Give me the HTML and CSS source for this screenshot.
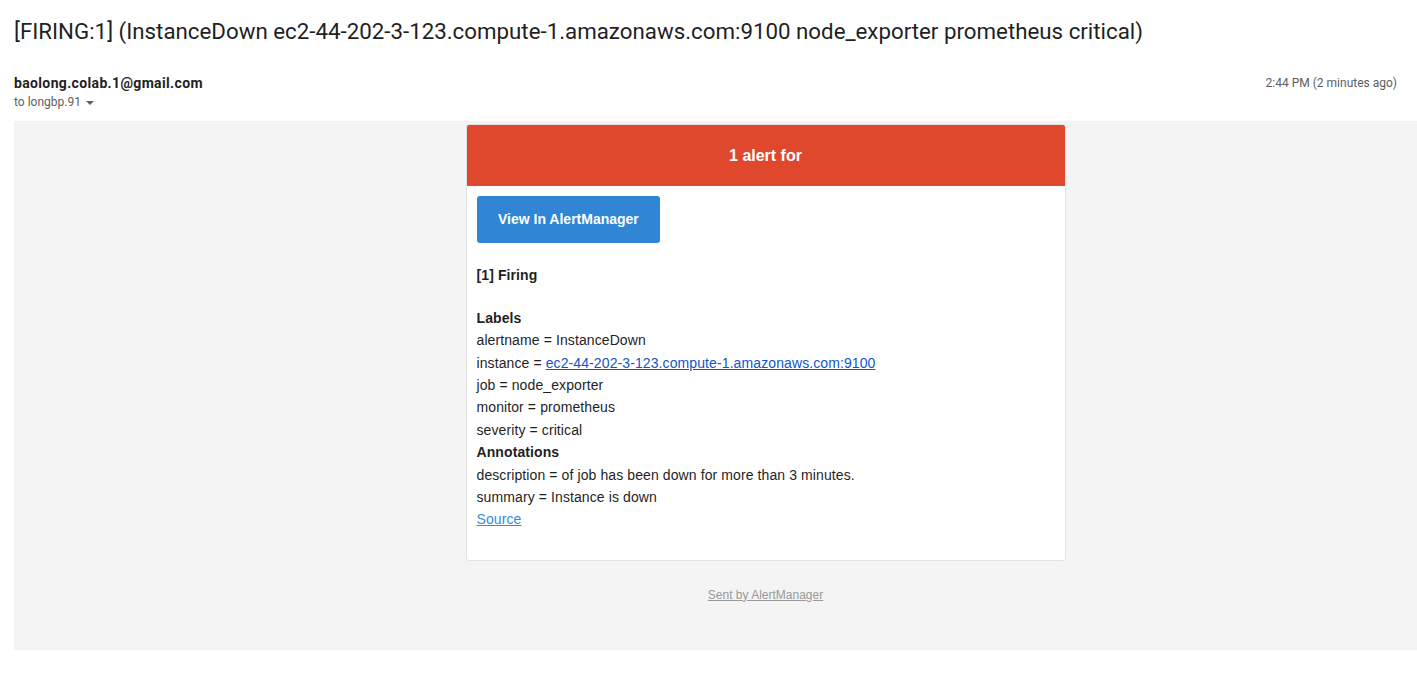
FILE: index.html
```html
<!DOCTYPE html>
<html>
<head>
<meta charset="utf-8">
<link rel="stylesheet" href="styles.css">
</head>
<body>
<div class="page">
  <h1 class="subject">[FIRING:1] (InstanceDown ec2-44-202-3-123.compute-1.amazonaws.com:9100 node_exporter prometheus critical)</h1>
  <div class="meta">
    <div class="from">
      <div class="sender">baolong.colab.1@gmail.com</div>
      <div class="to">to longbp.91 <span class="caret"></span></div>
    </div>
    <div class="time">2:44 PM (2 minutes ago)</div>
  </div>
  <div class="mailbody">
    <div class="inner">
      <div class="card">
        <div class="alert-head">1 alert for</div>
        <div class="content">
          <a class="btn">View In AlertManager</a>
          <div class="text">
            <div class="b">[1] Firing</div>
            <div class="blank"></div>
            <div class="b">Labels</div>
            <div>alertname = InstanceDown</div>
            <div>instance = <a class="link">ec2-44-202-3-123.compute-1.amazonaws.com:9100</a></div>
            <div>job = node_exporter</div>
            <div>monitor = prometheus</div>
            <div>severity = critical</div>
            <div class="b">Annotations</div>
            <div>description = of job has been down for more than 3 minutes.</div>
            <div>summary = Instance is down</div>
            <div><a class="src">Source</a></div>
          </div>
        </div>
      </div>
      <a class="footer">Sent by AlertManager</a>
    </div>
  </div>
</div>
</body>
</html>
```
FILE: styles.css
```css
html, body { margin: 0; padding: 0; background: #fff; }
body { overflow: hidden; font-family: Roboto, "Liberation Sans", Arial, sans-serif; color: #1f1f1f; }
.page { padding: 0 0 0 14px; }
.subject {
  margin: 0;
  padding-top: 17px;
  font-size: 22.3px;
  line-height: 28px;
  font-weight: 400;
  color: #1f1f1f;
  white-space: nowrap;
}
.meta {
  display: flex;
  justify-content: space-between;
  align-items: flex-start;
  margin-top: 28px;
  padding-right: 20px;
}
.sender { font-size: 14px; font-weight: 700; line-height: 20px; color: #1f1f1f; letter-spacing: 0.35px; }
.to { font-size: 12px; line-height: 16px; color: #5e5e5e; margin-top: 1px; display: flex; align-items: center; gap: 5px; }
.caret { width: 0; height: 0; border-left: 4px solid transparent; border-right: 4px solid transparent; border-top: 4px solid #5e5e5e; margin-top: 1px; }
.time { font-size: 12px; line-height: 20px; color: #5e5e5e; }
.mailbody {
  margin-top: 11px;
  background: #f4f4f4;
  height: 529px;
  overflow: hidden;
  font-family: "Liberation Sans", Helvetica, Arial, sans-serif;
}
.inner {
  width: 1503px;
  display: flex;
  flex-direction: column;
  align-items: center;
  padding-top: 3px;
}
.card {
  width: 598px;
  background: #fff;
  border: 1px solid #e2e2e2;
  border-radius: 3px;
  overflow: hidden;
}
.alert-head {
  background: #e0482e;
  color: #fff;
  font-size: 16px;
  font-weight: 700;
  text-align: center;
  height: 61px;
  line-height: 61px;
}
.content { padding: 10px 10px 29px; }
.btn {
  display: inline-block;
  background: #3085d4;
  color: #fff;
  font-size: 14px;
  font-weight: 700;
  border-radius: 3px;
  padding: 0 21.5px;
  height: 47px;
  line-height: 47px;
}
.text { margin-top: 21px; font-size: 14px; line-height: 22.4px; color: #1f1f1f; letter-spacing: 0.1px; }
.b { font-weight: 700; }
.blank { height: 20.4px; }
.link { color: #1155cc; text-decoration: underline; }
.src { color: #348eda; text-decoration: underline; }
.footer {
  margin-top: 26px;
  font-size: 12px;
  line-height: 16px;
  color: #999;
  text-decoration: underline;
}
```
